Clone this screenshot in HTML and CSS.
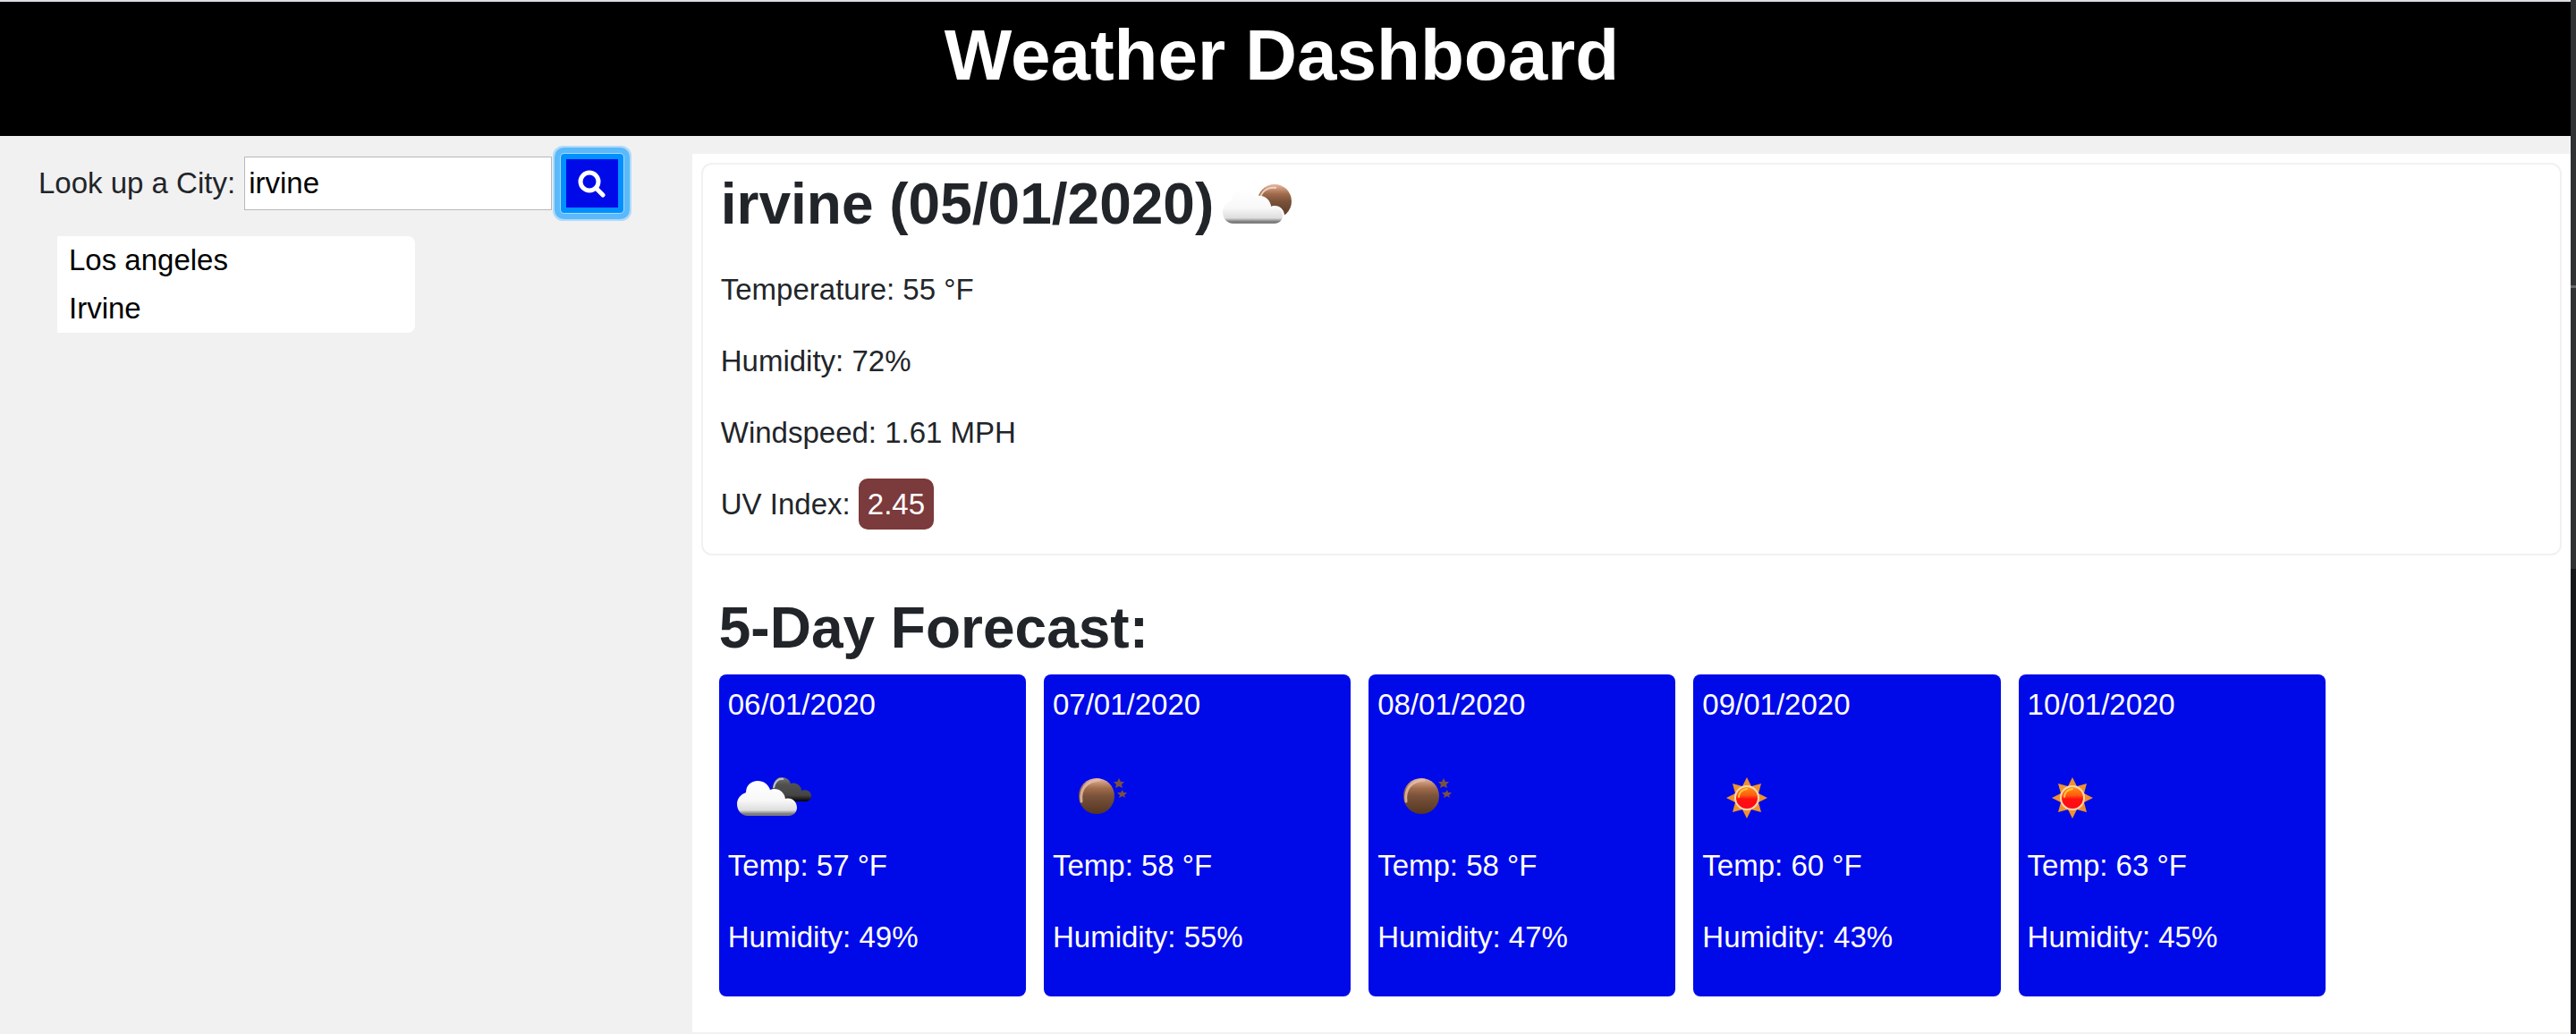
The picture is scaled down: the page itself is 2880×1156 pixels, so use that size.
FILE: index.html
```html
<!DOCTYPE html>
<html lang="en">
<head>
<meta charset="utf-8">
<meta name="viewport" content="width=device-width, initial-scale=1">
<title>Weather Dashboard</title>
<link rel="stylesheet" href="styles.css">
</head>
<body>
<svg class="defs" aria-hidden="true">
  <defs>
    <linearGradient id="cloud-fill" gradientUnits="userSpaceOnUse" x1="0" y1="29" x2="0" y2="68">
      <stop offset="0" stop-color="#fff"/>
      <stop offset=".55" stop-color="#f8f8f8"/>
      <stop offset=".84" stop-color="#dedede"/>
      <stop offset=".95" stop-color="#777"/>
      <stop offset="1" stop-color="#888"/>
    </linearGradient>
    <linearGradient id="dark-fill" x1="0" y1="0" x2="0" y2="1">
      <stop offset="0" stop-color="#777"/>
      <stop offset=".3" stop-color="#505050"/>
      <stop offset=".75" stop-color="#444"/>
      <stop offset="1" stop-color="#000"/>
    </linearGradient>
    <linearGradient id="moon-fill" x1="0" y1="0" x2="0" y2="1">
      <stop offset="0" stop-color="#e8b8a0"/>
      <stop offset=".28" stop-color="#a26c4c"/>
      <stop offset=".5" stop-color="#79523a"/>
      <stop offset="1" stop-color="#553622"/>
    </linearGradient>
    <linearGradient id="sun-fill" x1="0" y1="0" x2="0" y2="1">
      <stop offset="0" stop-color="#ff9a10"/>
      <stop offset=".4" stop-color="#ff5a10"/>
      <stop offset=".55" stop-color="#ff1010"/>
      <stop offset="1" stop-color="#ff0818"/>
    </linearGradient>
    <symbol id="cloud" viewBox="0 0 100 100">
      <path fill="url(#cloud-fill)" d="M22 68C15 68 10 62 10 55C10 49 14 44 20 42C20 34 26 29 33 29C40 29 45 33 47 39C55 36 63 41 64 49C71 47 77 52 77 59C77 64 73 68 68 68Z"/>
    </symbol>
    <symbol id="broken-clouds" viewBox="0 0 100 100">
      <path fill="url(#dark-fill)" d="M49 46C49 33 52 25 60 25C65 25 69 28 70 32C76 30 82 34 82 40C88 38 93 41 93 46C93 50 90 52 86 52H60Z"/>
      <path fill="none" stroke="#c4c4c4" stroke-width="2" d="M51 37C52 30 56 26 62 27"/>
      <use href="#cloud"/>
    </symbol>
    <symbol id="cloudy-night" viewBox="0 0 100 100">
      <circle cx="68" cy="43" r="19" fill="url(#moon-fill)"/>
      <path fill="none" stroke="#f0d4c4" stroke-width="2" d="M51 42C53 32 60 27 70 28"/>
      <path fill="#fff" d="M64 49C71 46 79 51 79 59V64H45L44 38C56 34 63 41 64 49Z"/>
      <use href="#cloud"/>
    </symbol>
    <symbol id="clear-night" viewBox="0 0 100 100">
      <circle cx="49" cy="46" r="20" fill="url(#moon-fill)"/>
      <path fill="none" stroke="#e5bca6" stroke-width="3" stroke-linecap="round" opacity=".85" d="M32 52C30 38 38 29 52 28"/>
      <path fill="#79523f" d="M74 26l2 4 4 0-3 3 1 4-4-2-4 2 1-4-3-3 4 0zM78 39l1 3 4 0-3 3 1 3-3-2-4 2 1-3-3-3 4 0z"/>
    </symbol>
    <symbol id="sunny" viewBox="0 0 100 100">
      <path fill="#ef922c" d="M50 25L55 35 66 32 63 43 73 48 63 53 66 64 55 61 50 71 45 61 34 64 37 53 27 48 37 43 34 32 45 35Z"/>
      <circle cx="50" cy="48" r="13" fill="url(#sun-fill)" stroke="#ffd8b4" stroke-width="2"/>
      <path fill="none" stroke="#ffc83c" stroke-width="2" stroke-linecap="round" d="M41 47C41 42 45 39 50 38"/>
    </symbol>
  </defs>
</svg>
<div class="window">
  <div class="page">
    <header class="banner"><h1>Weather Dashboard</h1></header>
    <div class="columns">
      <aside class="sidebar">
        <form class="search" onsubmit="return false">
          <label for="city">Look up a City:</label>
          <input id="city" type="text" value="irvine">
          <button type="submit" aria-label="Search">
            <svg viewBox="0 0 32 32" aria-hidden="true"><g fill="none" stroke="#fff" stroke-linecap="round"><circle cx="13" cy="14" r="10" stroke-width="5"/><path stroke-width="5" d="M21 22l7 7"/></g></svg>
          </button>
        </form>
        <ul class="history">
          <li>Los angeles</li>
          <li>Irvine</li>
        </ul>
      </aside>
      <main class="content">
        <section class="current">
          <h2>irvine (05/01/2020)<svg viewBox="0 6 100 80" aria-hidden="true"><use href="#cloudy-night" width="100" height="100"/></svg></h2>
          <p>Temperature: 55 °F</p>
          <p>Humidity: 72%</p>
          <p>Windspeed: 1.61 MPH</p>
          <p>UV Index: <span class="uv">2.45</span></p>
        </section>
        <section class="forecast">
          <h2>5-Day Forecast:</h2>
          <div class="days">
            <article class="day">
              <p>06/01/2020</p>
              <svg aria-hidden="true"><use href="#broken-clouds"/></svg>
              <p>Temp: 57 °F</p>
              <p>Humidity: 49%</p>
            </article>
            <article class="day">
              <p>07/01/2020</p>
              <svg aria-hidden="true"><use href="#clear-night"/></svg>
              <p>Temp: 58 °F</p>
              <p>Humidity: 55%</p>
            </article>
            <article class="day">
              <p>08/01/2020</p>
              <svg aria-hidden="true"><use href="#clear-night"/></svg>
              <p>Temp: 58 °F</p>
              <p>Humidity: 47%</p>
            </article>
            <article class="day">
              <p>09/01/2020</p>
              <svg aria-hidden="true"><use href="#sunny"/></svg>
              <p>Temp: 60 °F</p>
              <p>Humidity: 43%</p>
            </article>
            <article class="day">
              <p>10/01/2020</p>
              <svg aria-hidden="true"><use href="#sunny"/></svg>
              <p>Temp: 63 °F</p>
              <p>Humidity: 45%</p>
            </article>
          </div>
        </section>
      </main>
    </div>
  </div>
  <div class="edge"></div>
</div>
</body>
</html>
```

FILE: styles.css
```css
* {
  box-sizing: border-box;
}

body {
  margin: 0;
  background: #f1f1f1;
  color: #212529;
  font: 33px/48px "Liberation Sans", Arial, sans-serif;
}

h1,
h2,
p,
ul {
  margin: 0;
}

.defs {
  position: absolute;
  width: 0;
  height: 0;
}

.window {
  display: flex;
  min-height: 100vh;
}

.page {
  flex: 1;
  min-width: 0;
}

/* dark strip along the right side of the window */
.edge {
  width: 6px;
  background: linear-gradient(#303233 319px, #6b6b6b 319px, #6b6b6b 322px, #303233 322px, #303233 636px, #151718 636px);
}

.banner {
  padding: 12px 8px 42px 0;
  border-top: 2px solid #dcdee3;
  background: #000;
  color: #fff;
  text-align: center;
}

.banner h1 {
  font-size: 80px;
  line-height: 96px;
}

.columns {
  display: grid;
  grid-template-columns: 7fr 19fr;
  padding: 20px 0 2px;
}

.search {
  display: flex;
  align-items: center;
  gap: 10px;
  padding-left: 43px;
}

.search input {
  width: 344px;
  height: 60px;
  padding: 0 4px;
  border: 1px solid #b8b8b8;
  border-radius: 0;
  background: #fff;
  color: #000;
  font: inherit;
}

.search button {
  display: flex;
  align-items: center;
  justify-content: center;
  width: 70px;
  height: 66px;
  padding: 0;
  border: 6px solid #0090ff;
  border-radius: 4px;
  background: #000ae9;
  box-shadow: 0 0 0 1px #a9d8f8, 0 0 0 7px #5ab9fb, 0 0 0 9px #b0daf8;
}

.search svg {
  width: 32px;
  height: 32px;
}

.history {
  width: 400px;
  margin: 26px 0 0 64px;
  padding: 0 13px;
  border-radius: 0 8px 8px 0;
  background: #fff;
  color: #000;
  line-height: 54px;
  list-style: none;
}

.content {
  padding: 10px 10px 40px;
  background: #fff;
}

.current {
  padding: 4px 20px 31px;
  border: 2px solid #f1f1f1;
  border-radius: 12px;
}

.current h2 {
  display: flex;
  align-items: center;
  margin-bottom: 32px;
  font-size: 64px;
  line-height: 80px;
}

.current h2 svg {
  width: 100px;
  height: 80px;
}

.current p + p {
  margin-top: 32px;
}

.uv {
  padding: 10px;
  border-radius: 10px;
  background: #7b3a3b;
  color: #fff;
}

.forecast {
  max-width: 1816px;
  padding: 43px 0 0 20px;
}

.forecast h2 {
  margin-bottom: 14px;
  font-size: 64px;
  line-height: 76px;
}

.days {
  display: grid;
  grid-template-columns: repeat(5, 1fr);
  gap: 20px;
}

.day {
  padding: 10px;
  border-radius: 8px;
  background: #000ae9;
  color: #fff;
}

.day p {
  margin-bottom: 32px;
}

.day svg {
  display: block;
  width: 100px;
  height: 100px;
}
```
